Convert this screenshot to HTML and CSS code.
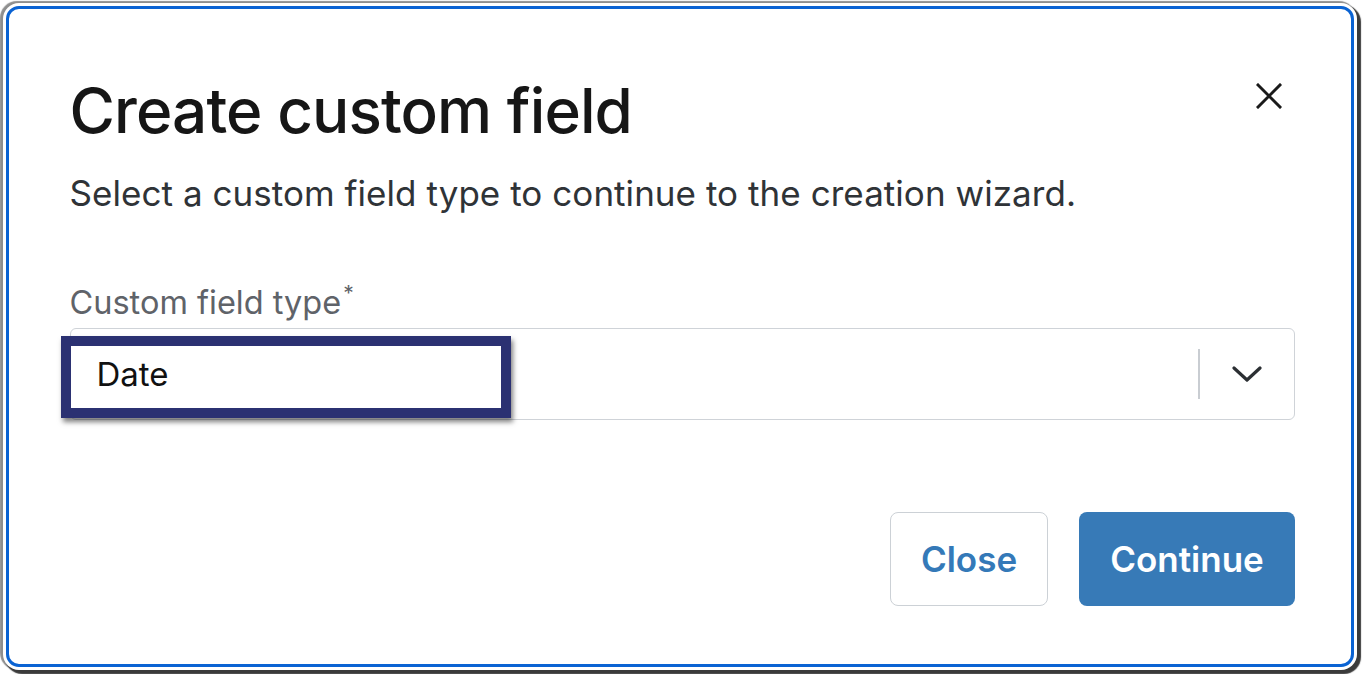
FILE: index.html
```html
<!DOCTYPE html>
<html lang="en">
<head>
<meta charset="utf-8">
<title>Create custom field</title>
<link rel="stylesheet" href="styles.css">
</head>
<body>
<div class="frame">
  <div class="modal">
    <div class="header">
      <h1 class="title">Create custom field</h1>
      <button class="close-x" aria-label="Close">
        <svg width="26" height="26" viewBox="0 0 26 26"><path d="M2 2 L24 24 M24 2 L2 24" stroke="#1a1a1a" stroke-width="3" stroke-linecap="square" fill="none"/></svg>
      </button>
    </div>
    <p class="subtitle">Select a custom field type to continue to the creation wizard.</p>
    <div class="field">
      <label class="label">Custom field type<span class="req">*</span></label>
      <div class="select">
        <span class="value">Date</span>
        <span class="sep"></span>
        <span class="chev">
          <svg width="30" height="16" viewBox="0 0 30 16"><path d="M2 2 L15 14 L28 2" stroke="#2b2f33" stroke-width="3.2" fill="none" stroke-linecap="round" stroke-linejoin="round"/></svg>
        </span>
        <div class="highlight"></div>
      </div>
    </div>
    <div class="footer">
      <button class="btn btn-secondary">Close</button>
      <button class="btn btn-primary">Continue</button>
    </div>
  </div>
</div>
</body>
</html>
```
FILE: styles.css
```css
html, body {
  margin: 0;
  padding: 0;
  background: #ffffff;
}
body {
  width: 1362px;
  height: 674px;
  overflow: hidden;
  font-family: Inter, "Noto Sans", "Liberation Sans", sans-serif;
}
.frame {
  margin: 6px 0 0 6px;
  width: 1348px;
  height: 661px;
  box-sizing: border-box;
  border: 3.5px solid #0a63d3;
  border-radius: 13px;
  background: #fff;
  box-shadow: 0 0 0 3px #fff, 3px 3px 1px 4px #3b3b3b, -2px -1px 1px 4px #8e8e8e;
}
.modal {
  padding: 65px 56px 0 60.5px;
  display: flex;
  flex-direction: column;
}
.header {
  display: flex;
  justify-content: space-between;
  align-items: flex-start;
}
.title {
  margin: 0;
  font-size: 62px;
  font-weight: 500;
  line-height: 1.2;
  color: #161616;
  letter-spacing: -0.9px;
}
.close-x {
  border: 0;
  background: transparent;
  padding: 0;
  margin: 8.5px 13.5px 0 0;
  width: 26px;
  height: 26px;
  cursor: pointer;
}
.subtitle {
  margin: 23px 0 0;
  font-size: 35px;
  line-height: 1.3;
  color: #2f3337;
  letter-spacing: 0.05px;
}
.field {
  margin-top: 63px;
  display: flex;
  flex-direction: column;
}
.label {
  font-size: 32.5px;
  line-height: 1.3;
  color: #5f6369;
}
.req {
  font-size: 21px;
  vertical-align: 13px;
  margin-left: 2px;
}
.select {
  position: relative;
  margin-top: 4px;
  height: 92px;
  box-sizing: border-box;
  border: 1.5px solid #cfd3d8;
  border-radius: 6px;
  display: flex;
  align-items: center;
  padding-left: 26px;
}
.value {
  flex: 1;
  font-size: 33px;
  color: #111;
}
.sep {
  width: 2px;
  height: 50px;
  background: #c9cdd2;
}
.chev {
  width: 94px;
  display: flex;
  justify-content: center;
  align-items: center;
}
.chev svg {
  display: block;
}
.highlight {
  position: absolute;
  left: -9.5px;
  top: 6.5px;
  width: 450px;
  height: 82px;
  box-sizing: border-box;
  border: 10px solid #2b3172;
  box-shadow: 2px 4px 5px rgba(0, 0, 0, 0.5);
  pointer-events: none;
}
.footer {
  margin-top: 92px;
  display: flex;
  justify-content: flex-end;
  gap: 31px;
}
.btn {
  font-family: Inter, "Noto Sans", "Liberation Sans", sans-serif;
  font-size: 35px;
  font-weight: 600;
  height: 94px;
  border-radius: 8px;
  cursor: pointer;
  padding: 0;
}
.btn-secondary {
  width: 158px;
  background: #fff;
  border: 1.5px solid #ccd1d6;
  color: #3479b8;
}
.btn-primary {
  width: 216px;
  background: #377ab7;
  border: 0;
  color: #fff;
}
```
